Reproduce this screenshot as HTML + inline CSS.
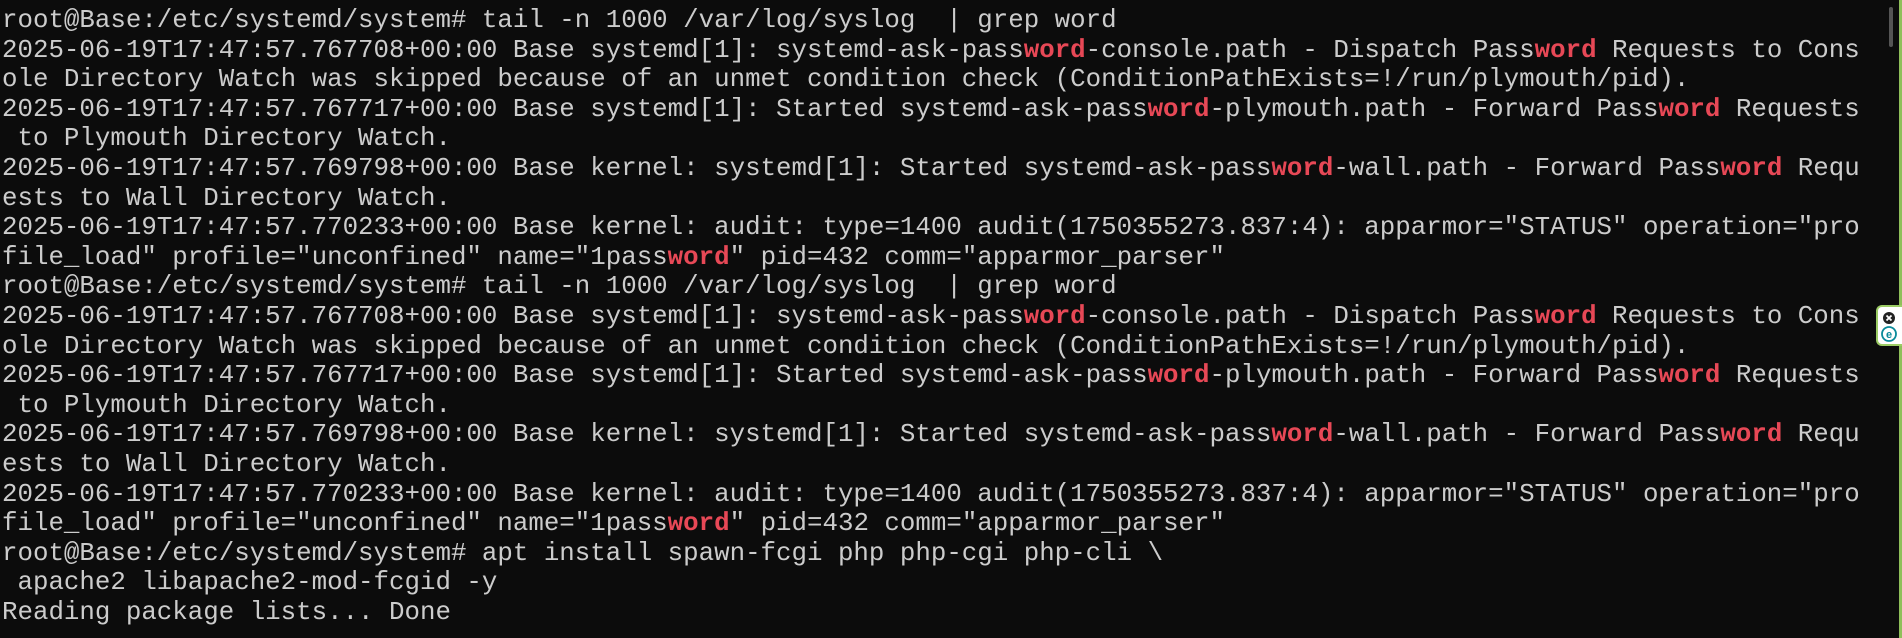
<!DOCTYPE html>
<html><head><style>
html,body{margin:0;padding:0;background:#0c0c0c;width:1902px;height:638px;overflow:hidden}
svg.bg{position:absolute;left:0;top:0}
pre{margin:0;position:absolute;left:2px;top:6px;font-family:"Liberation Mono",monospace;font-size:25.8px;line-height:29.6px;color:#cccccc;white-space:pre}
b{color:#e74856;font-weight:bold}
.sb{position:absolute;left:1889px;top:7px;width:4px;height:40px;background:#555;border-radius:2px}
.edge{position:absolute;left:1899px;top:0;width:3px;height:638px;background:#8fbf5a}
.w{position:absolute;left:1876px;top:305px;width:26px;height:41px;background:#fff;border:2px solid #9ccc65;border-right:none;border-radius:6px 0 0 6px;box-sizing:border-box}
</style></head><body>
<svg class="bg" width="1902" height="638"><rect width="1902" height="638" fill="#0c0c0c"/></svg>
<pre>root@Base:/etc/systemd/system# tail -n 1000 /var/log/syslog  | grep word
2025-06-19T17:47:57.767708+00:00 Base systemd[1]: systemd-ask-pass<b>word</b>-console.path - Dispatch Pass<b>word</b> Requests to Cons
ole Directory Watch was skipped because of an unmet condition check (ConditionPathExists=!/run/plymouth/pid).
2025-06-19T17:47:57.767717+00:00 Base systemd[1]: Started systemd-ask-pass<b>word</b>-plymouth.path - Forward Pass<b>word</b> Requests
 to Plymouth Directory Watch.
2025-06-19T17:47:57.769798+00:00 Base kernel: systemd[1]: Started systemd-ask-pass<b>word</b>-wall.path - Forward Pass<b>word</b> Requ
ests to Wall Directory Watch.
2025-06-19T17:47:57.770233+00:00 Base kernel: audit: type=1400 audit(1750355273.837:4): apparmor="STATUS" operation="pro
file_load" profile="unconfined" name="1pass<b>word</b>" pid=432 comm="apparmor_parser"
root@Base:/etc/systemd/system# tail -n 1000 /var/log/syslog  | grep word
2025-06-19T17:47:57.767708+00:00 Base systemd[1]: systemd-ask-pass<b>word</b>-console.path - Dispatch Pass<b>word</b> Requests to Cons
ole Directory Watch was skipped because of an unmet condition check (ConditionPathExists=!/run/plymouth/pid).
2025-06-19T17:47:57.767717+00:00 Base systemd[1]: Started systemd-ask-pass<b>word</b>-plymouth.path - Forward Pass<b>word</b> Requests
 to Plymouth Directory Watch.
2025-06-19T17:47:57.769798+00:00 Base kernel: systemd[1]: Started systemd-ask-pass<b>word</b>-wall.path - Forward Pass<b>word</b> Requ
ests to Wall Directory Watch.
2025-06-19T17:47:57.770233+00:00 Base kernel: audit: type=1400 audit(1750355273.837:4): apparmor="STATUS" operation="pro
file_load" profile="unconfined" name="1pass<b>word</b>" pid=432 comm="apparmor_parser"
root@Base:/etc/systemd/system# apt install spawn-fcgi php php-cgi php-cli \
 apache2 libapache2-mod-fcgid -y
Reading package lists... Done</pre>
<div class="sb"></div>
<div class="edge"></div>
<div class="w">
<svg width="24" height="38" viewBox="0 0 24 38"><circle cx="11" cy="11" r="6" fill="#222"/><path d="M8.5 8.5l5 5M13.5 8.5l-5 5" stroke="#fff" stroke-width="1.8"/><circle cx="11" cy="27" r="7" fill="none" stroke="#0a8a9a" stroke-width="1.8"/><text x="11" y="31" font-family="Liberation Sans,sans-serif" font-size="11" font-weight="bold" fill="#0a8a9a" text-anchor="middle">e</text></svg>
</div>
</body></html>
